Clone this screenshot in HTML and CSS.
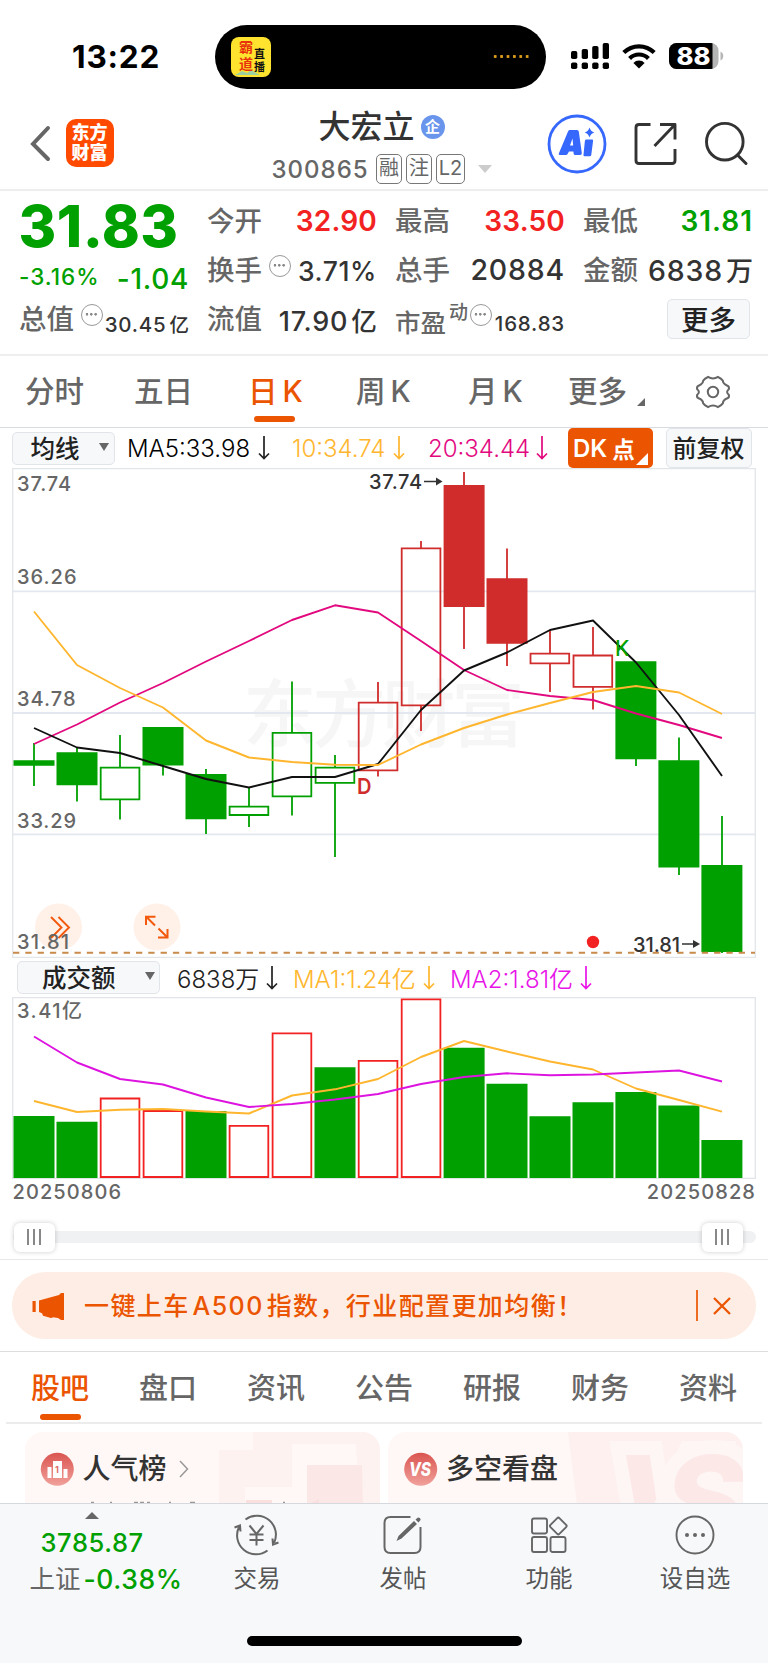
FILE: index.html
```html
<!DOCTYPE html>
<html lang="zh-CN">
<head>
<meta charset="utf-8">
<title>大宏立 300865</title>
<link rel="stylesheet" href="styles.css">
</head>
<body>
<div class="phone">
  <div class="status">
    <span class="time">13:22</span>
    <div class="island">
      <svg class="live" width="40" height="40" viewBox="0 0 40 40">
        <rect width="40" height="40" rx="8" fill="#ffe32e"/>
        <path d="M4 38l7-4 5 2 4-3 9 5z" fill="#9fd0a0"/>
        <text x="8" y="15" font-size="14" fill="#e8320c" font-weight="700">霸</text>
        <text x="8" y="32" font-size="14" fill="#e8320c" font-weight="700">道</text>
        <text x="23" y="21" font-size="11" fill="#111" font-weight="700">直</text>
        <text x="23" y="34" font-size="11" fill="#111" font-weight="700">播</text>
      </svg>
      <i class="dots"></i>
    </div>
    <svg class="signal" width="156" height="30" viewBox="568 41 156 30">
      <g fill="#000">
        <rect x="571" y="51" width="6.300" height="8" rx="1.800"/><rect x="581.700" y="49" width="6.300" height="10" rx="1.800"/><rect x="592.200" y="46" width="6.300" height="13" rx="1.800"/><rect x="602.700" y="43" width="6.300" height="16" rx="1.800"/>
        <rect x="571" y="62.500" width="6.300" height="6.500" rx="1.800"/><rect x="581.700" y="62.500" width="6.300" height="6.500" rx="1.800"/><rect x="592.200" y="62.500" width="6.300" height="6.500" rx="1.800"/><rect x="602.700" y="62.500" width="6.300" height="6.500" rx="1.800"/>
        <path d="M639 68.500l-5.600-5.600a8 8 0 0 1 11.200 0z"/>
      </g>
      <path d="M623.800 52.600a21.500 21.500 0 0 1 30.400 0M629.600 58.400a13.300 13.300 0 0 1 18.800 0" fill="none" stroke="#000" stroke-width="4.200"/>
      <clipPath id="bat"><rect x="669" y="43" width="49.500" height="26" rx="7.500"/></clipPath>
      <g clip-path="url(#bat)"><rect x="669" y="43" width="50" height="26" fill="#b5b5b5"/><rect x="669" y="43" width="43.500" height="26" fill="#000"/></g>
      <path d="M720.500 51.500a5 5 0 0 1 0 9z" fill="#b5b5b5"/>
      <text x="676.500" y="65" font-size="24" font-weight="800" fill="#fff" textLength="34" lengthAdjust="spacingAndGlyphs">88</text>
    </svg>
  </div>

  <header class="head">
    <svg class="back" width="22" height="38" viewBox="0 0 22 38"><path d="M19 3L4 19l15 15" fill="none" stroke="#666" stroke-width="4" stroke-linecap="round"/></svg>
    <div class="logo"><span>东方</span><span>财富</span></div>
    <div class="name">
      <div class="name-top"><h1>大宏立</h1><em>企</em></div>
      <div class="name-sub"><b>300865</b><i>融</i><i>注</i><i class="l2">L2</i>
        <svg width="14" height="8" viewBox="0 0 14 8"><path d="M0 0h14L7 8z" fill="#ccc"/></svg></div>
    </div>
    <svg class="ai" width="60" height="60" viewBox="547.500 113.500 60 60">
      <circle cx="577.500" cy="143.500" r="28" fill="none" stroke="#3768fe" stroke-width="2.800"/>
      <path fill="#3768fe" fill-rule="evenodd" d="M568 129.500h9.500q1.500 0 1.800 1.500l3 21.500q.2 2-1.600 2h-5q-1.500 0-1.600-1.500l-.2-2h-4.500l-1 2q-.7 1.500-2.200 1.500h-6q-1.600 0-.8-1.700l9-21.500q.6-1.800 1.600-1.800zM573 138l-2.500 7h3.200zM586 139h6.500q1.300 0 1.100 1.300l-1.800 14q-.2 1.500-1.500 1.500h-5.200q-1.300 0-1.100-1.500l1.400-14q.1-1.300 1.600-1.300zM590 127q1.200 4 4.800 5-3.600 1-4.800 5-1.200-4-4.800-5 3.600-1 4.800-5z"/>
    </svg>
    <svg class="share" width="46" height="46" viewBox="632 120.500 46 46"><path d="M650.500 124H639q-3 0-3 3v33q0 3 3 3h33q3 0 3-3v-11.500M660 124h15v15M675 124l-20.500 21.500" fill="none" stroke="#333" stroke-width="2.900" stroke-linejoin="round"/></svg>
    <svg class="search" width="46" height="46" viewBox="703 120.500 46 46"><circle cx="724.800" cy="141.200" r="18.300" fill="none" stroke="#333" stroke-width="2.900"/><path d="M737.500 154.500l8.500 8.500" stroke="#333" stroke-width="3" stroke-linecap="round"/></svg>
  </header>

  <section class="quote">
    <div class="col">
      <div class="price">31.83</div>
      <div class="change"><span>-3.16%</span><b>-1.04</b></div>
      <div class="cell"><span>总值</span><i class="info"></i><b class="small">30.45<u>亿</u></b></div>
    </div>
    <div class="col">
      <div class="cell"><span>今开</span><b class="up">32.90</b></div>
      <div class="cell"><span>换手</span><i class="info"></i><b class="mid">3.71%</b></div>
      <div class="cell"><span>流值</span><b class="mid2">17.90<u>亿</u></b></div>
    </div>
    <div class="col">
      <div class="cell"><span>最高</span><b class="up">33.50</b></div>
      <div class="cell"><span>总手</span><b>20884</b></div>
      <div class="cell pe"><span>市盈</span><sup>动</sup><i class="info"></i><b class="small">168.83</b></div>
    </div>
    <div class="col">
      <div class="cell"><span>最低</span><b class="down">31.81</b></div>
      <div class="cell"><span>金额</span><b>6838<u>万</u></b></div>
      <div class="cell end"><button class="more">更多</button></div>
    </div>
  </section>

  <nav class="periods">
    <a>分时</a><a>五日</a><a class="on">日<s>K</s></a><a>周<s>K</s></a><a>月<s>K</s></a>
    <a class="has-tri">更多<svg width="8" height="8" viewBox="0 0 8 8"><path d="M8 0v8H0z" fill="#666"/></svg></a>
    <svg class="gear" width="36" height="36" viewBox="-18 -18 36 36" fill="none" stroke="#666" stroke-width="2"><path transform="scale(1 1.060)" d="M-5-14.200Q0-11.200 5-14.200Q8.200-13 9.800-10.800Q10-7.600 14.400-6Q16.600-5 15.800-2.600Q12.400 0 15.800 2.600Q16.600 5 14.400 6Q10 7.600 9.800 10.800Q8.200 13 5 14.200Q0 11.200-5 14.200Q-8.200 13-9.800 10.800Q-10 7.600-14.400 6Q-16.600 5-15.800 2.600Q-12.400 0-15.800-2.600Q-16.600-5-14.400-6Q-10-7.600-9.800-10.800Q-8.200-13-5-14.200Z"/><circle r="5.200"/></svg>
  </nav>

  <div class="legend ma">
    <button class="pick">均线<svg width="10" height="8" viewBox="0 0 10 8"><path d="M0 0h10L5 8z"/></svg></button>
    <span class="m1">MA5:33.98</span><svg class="arr" width="12" height="24" viewBox="0 0 12 24"><path d="M6 0v22.500M1 17.500l5 5 5-5"/></svg>
    <span class="m2">10:34.74</span><svg class="arr a2" width="12" height="24" viewBox="0 0 12 24"><path d="M6 0v22.500M1 17.500l5 5 5-5"/></svg>
    <span class="m3">20:34.44</span><svg class="arr a3" width="12" height="24" viewBox="0 0 12 24"><path d="M6 0v22.500M1 17.500l5 5 5-5"/></svg>
    <button class="dk">DK<u>点</u><svg width="12" height="12" viewBox="0 0 12 12"><path d="M12 0v12H0z" fill="#fff"/></svg></button>
    <button class="adj">前复权</button>
  </div>

  <svg class="kline" width="768" height="490" viewBox="0 468 768 490">
    <g font-size="74" font-weight="500" fill="#f6f6f6"><text x="243" y="741" textLength="282">东方财富</text></g>
    <path d="M12.700 958V468.500H755.300V958M12.700 957.300H755.300" fill="none" stroke="#e3e6e9" stroke-width="1.300"/>
    <path d="M13 591.300H755M13 713H755M13 834.300H755" stroke="#e3e7f0" stroke-width="1.800"/>
    <circle cx="58.500" cy="927" r="23.500" fill="#fff0e8"/><circle cx="157" cy="927" r="23.500" fill="#fff0e8"/>
    <path d="M51 917l10.500 10.500L51 938M58.500 917L69 927.500 58.500 938" fill="none" stroke="#f2590c" stroke-width="1.900"/>
    <path d="M146 925v-8.300h9.500M146.500 917l8.500 8.500M167.500 929v8.500H158M167 937l-8.500-8.500" fill="none" stroke="#f2590c" stroke-width="2"/>
    <g class="axis" font-size="20" font-weight="500" fill="#666">
      <text x="17" y="490.700" textLength="54">37.74</text><text x="17" y="584" textLength="59.500">36.26</text><text x="17" y="706" textLength="58.500">34.78</text><text x="17" y="827.500" textLength="59">33.29</text><text x="17" y="949.300" textLength="52">31.81</text>
    </g>
    <g stroke="#d02c2c" stroke-width="1.800" fill="#fff">
      <path d="M378 682v21M378 770v6.500M421 541v7M421 705v26M464 472v177M507 548.500V666M550 631v22M550 663v29M593 627v28M593 687v22.500"/>
      <g fill="none"><path d="M358.700 702.700h38.700v67.700h-38.700zM401.700 548.300h38.700v157h-38.700zM530.500 653.700h38.700v9.700h-38.700zM573.500 655.500h38.700v31.300h-38.700z"/></g>
      <path fill="#d02c2c" stroke="none" d="M443.600 485h41v122h-41zM486.500 578.300h41v65.500h-41z"/>
    </g>
    <g stroke="#00a000" stroke-width="1.800">
      <path d="M34 743v43M77 747v54.500M120 735v32M120 800v19.500M163 727v48.500M206 769v65M249 787v19M249 815v12M292 681.500V732M292 797v18.500M335 755v12M335 783v74M636 759v7M679 737.500V875M722 816v137"/>
      <path fill="none" d="M100.700 767.600h38.700v31.700h-38.700zM229.600 806.600h38.700v8.400h-38.700zM272.600 732.800h38.700v63.500h-38.700zM315.600 767.600h38.700v15.300h-38.700z"/>
      <path fill="#00a000" stroke="none" d="M13.500 760.200h41v5.500h-41zM56.500 752.300h41v33h-41zM142.500 727h41v38.500h-41zM185.500 774h41v45.200h-41zM615.400 661.300h41v98h-41zM658.400 760.200h41v107.200h-41zM701.400 865h41v87h-41z"/>
    </g>
    <g fill="none" stroke-width="1.900" stroke-linejoin="round">
      <path stroke="#e2097f" d="M34 744L77 724.500 120 702.500 163 683 206 661.500 249 641 292 620 335 605.300 378 612.500 421 641 464 670 507 690 550 696 593 700 636 713.500 679 725 722 738"/>
      <path stroke="#111" d="M34 728L77 747.500 120 753 163 766 206 779 249 787.500 292 777 335 777 378 764 421 710 464 670.500 507 652.500 550 630 593 620.500 636 662.500 679 715 722 776"/>
      <path stroke="#ffb62e" d="M34 611.500L77 665 120 688 163 707.500 206 740.500 249 757.500 292 762 335 764.700 378 765 421 744.500 464 728 507 714.500 550 703 593 692 636 686 679 692.500 722 714"/>
    </g>
    <path d="M13 952.700H755" stroke="#c98a4a" stroke-width="2" stroke-dasharray="6.300 6"/>
    <text x="357" y="793.500" font-size="22" font-weight="600" fill="#d02c2c" textLength="14.500" lengthAdjust="spacingAndGlyphs">D</text>
    <text x="615" y="655.500" font-size="21" font-weight="500" fill="#00a000">K</text>
    <g font-size="20" font-weight="500" fill="#333"><text x="369" y="488.500" textLength="53">37.74</text><text x="633" y="951.500" textLength="47">31.81</text></g>
    <path d="M424 481.500h12M682 944h12" stroke="#333" stroke-width="1.600"/><path d="M436 477.500l6.500 4-6.500 4zM693 940l7 4-7 4z" fill="#333"/>
    <circle cx="593" cy="942" r="6.200" fill="#f32222"/>
  </svg>

  <div class="legend vol">
    <button class="pick wide">成交额<svg width="10" height="8" viewBox="0 0 10 8"><path d="M0 0h10L5 8z"/></svg></button>
    <span class="v1">6838万</span><svg class="arr" width="12" height="24" viewBox="0 0 12 24"><path d="M6 0v22.500M1 17.500l5 5 5-5"/></svg>
    <span class="v2">MA1:1.24亿</span><svg class="arr a2" width="12" height="24" viewBox="0 0 12 24"><path d="M6 0v22.500M1 17.500l5 5 5-5"/></svg>
    <span class="v3">MA2:1.81亿</span><svg class="arr a4" width="12" height="24" viewBox="0 0 12 24"><path d="M6 0v22.500M1 17.500l5 5 5-5"/></svg>
  </div>

  <svg class="volume" width="768" height="182" viewBox="0 997 768 182">
    <path d="M12.700 997.700H755.300V1178.300H12.700z" fill="none" stroke="#e1e4e8" stroke-width="1.300"/>
    <text x="17" y="1018" font-size="20" font-weight="500" fill="#666" textLength="65">3.41亿</text>
    <path fill="#00a000" d="M13.500 1116h41v62h-41zM56.500 1121.700h41v56.300h-41zM185.500 1111h41v67h-41zM314.500 1067.300h41v110.700h-41zM443.600 1047.700h41v130.300h-41zM486.500 1083.700h41v94.300h-41zM529.500 1116.300h41v61.700h-41zM572.500 1102.300h41v75.700h-41zM615.400 1092h41v86h-41zM658.400 1105.500h41v72.500h-41zM701.400 1140h41v38h-41z"/>
    <path fill="none" stroke="#f32222" stroke-width="1.800" d="M100.700 1098.500h38.700v78.500h-38.700zM143.600 1111h38.700v66h-38.700zM229.600 1125.800h38.700v51.200h-38.700zM272.600 1033.300h38.700v143.700h-38.700zM358.700 1060.800h38.700v116.200h-38.700zM401.700 999.300h38.700v177.700h-38.700z"/>
    <g fill="none" stroke-width="1.900" stroke-linejoin="round">
      <path stroke="#ffb62e" d="M34 1101L77 1112 120 1109.700 163 1109 206 1111.500 249 1113.500 292 1095.500 335 1089.300 378 1079 421 1057 464 1041 507 1051.500 550 1061.500 593 1069.500 636 1088.500 679 1100 722 1111.700"/>
      <path stroke="#dd14e0" d="M34 1036.500L77 1062.500 120 1079 163 1084.500 206 1097.500 249 1107 292 1104 335 1099.500 378 1094 421 1084 464 1077 507 1073.300 550 1075.300 593 1074.500 636 1072.500 679 1070.500 722 1081.500"/>
    </g>
  </svg>
  <div class="dates"><span>20250806</span><span>20250828</span></div>
  <div class="slider"><div class="track"><i class="thumb"></i><i class="thumb"></i></div></div>

  <div class="notice-wrap">
    <div class="notice">
      <svg width="34" height="30" viewBox="32 1290 34 30"><path d="M32.500 1300h3.200v11h-3.200zM39 1299.500l20-5.500 2-2h3v27h-3l-3-2-5-.8q-1 1-3 .6l-7-2-1-2.500-3-1.300z" fill="#eb5400"/></svg>
      <p>一键上车<s>A500</s>指数，行业配置更加均衡！</p>
      <i class="bar"></i>
      <svg width="18" height="18" viewBox="0 0 18 18"><path d="M1 1l16 16M17 1L1 17" stroke="#eb5400" stroke-width="2.200"/></svg>
    </div>
  </div>

  <nav class="sections"><a class="on">股吧</a><a>盘口</a><a>资讯</a><a>公告</a><a>研报</a><a>财务</a><a>资料</a></nav>

  <div class="cards">
    <div class="card">
      <svg class="art" width="355" height="72" viewBox="25 1431 355 72">
        <path d="M253 1431h127v72h-21l-3-60h-64v43h-47v17h-26v-54h34z" fill="#fdf2f0"/><path d="M307 1464h55l1 39h-56z" fill="#fbe8e6"/>
        <path d="M246 1499h26v4h-26zM309 1503l10-5v5z" fill="#f9e0df"/>
        <path d="M91 1501.500h3M110 1501.500h2M134 1501.500h4M140 1501.500h4M147 1501.500h3M169 1501.500h2M190 1501.500h5M283 1501.500h2" stroke="#999" stroke-width="1.500"/>
        <linearGradient id="rd" x1="0" y1="0" x2="0" y2="1"><stop offset="0" stop-color="#da5550"/><stop offset="1" stop-color="#f1a19c"/></linearGradient>
        <circle cx="57.300" cy="1468.300" r="16.500" fill="url(#rd)"/>
        <path d="M53 1460h9v17h-9zM47.500 1466h4v11h-4zM63.500 1468h4v9h-4z" fill="#fff"/>
        <text x="55" y="1472" font-size="9" font-weight="700" fill="#dd6a65">1</text>
      </svg>
      <h2>人气榜</h2>
      <svg class="go" width="10" height="18" viewBox="0 0 10 18"><path d="M1 1l7.500 8L1 17" fill="none" stroke="#999" stroke-width="1.500"/></svg>
    </div>
    <div class="card">
      <svg class="art" width="355" height="72" viewBox="388 1431 355 72">
        <path d="M568 1431h175v72H577z" fill="#fdf0ef"/>
        <text x="614" y="1543" font-size="122" font-weight="800" font-style="italic" fill="#fce8e7" stroke="#fdf6f4" stroke-width="28" paint-order="stroke" textLength="130">VS</text>
        <circle cx="420.700" cy="1468.300" r="16.500" fill="url(#rd)"/>
        <text x="409" y="1475" font-size="18.500" font-weight="800" font-style="italic" fill="#fff" textLength="22" lengthAdjust="spacingAndGlyphs">VS</text>
      </svg>
      <h2>多空看盘</h2>
    </div>
  </div>

  <footer class="dock">
    <div class="index">
      <svg width="14" height="7" viewBox="0 0 14 7"><path d="M0 7h14L7 0z" fill="#666"/></svg>
      <b>3785.87</b>
      <div><span>上证</span><b>-0.38%</b></div>
    </div>
    <div class="item"><svg width="46" height="42" viewBox="-22.500 -21 46 42" fill="none" stroke="#666" stroke-width="2"><path d="M-11-15.500A19 19 0 0 1 17.500 8M11 15.500A19 19 0 0 1-17.500-8M-22-7.500l5.500-2 .5 6M22 7.500l-5.500 2-.5-6M-7-9.500L0-1l7-8.500M0-1V10.500M-7-.500H7M-7 5H7"/></svg><span>交易</span></div>
    <div class="item"><svg width="42" height="42" viewBox="-20.500 -21 42 42" fill="none" stroke="#666" stroke-width="2"><path d="M8-18h-20q-6 0-6 6v24q0 6 6 6h24q6 0 6-6V-8"/><path d="M-6 6l2-5L11.500-14l3 3L-1 3.500zM13-15.500l2.500-2q3 0 2.500 2.500l-2 2.500z" fill="#666" stroke="none"/></svg><span>发帖</span></div>
    <div class="item"><svg width="42" height="42" viewBox="-21 -21 42 42" fill="none" stroke="#666" stroke-width="1.900"><rect x="-17" y="-16.500" width="15" height="15" rx="2"/><rect x="-17" y="2" width="15" height="15" rx="2"/><rect x="1.500" y="2" width="15" height="15" rx="2"/><rect x="3" y="-15.300" width="12.600" height="12.600" rx="1.500" transform="rotate(45 9.300 -9)"/></svg><span>功能</span></div>
    <div class="item"><svg width="42" height="42" viewBox="-21 -21 42 42"><circle r="18.500" fill="none" stroke="#666" stroke-width="1.900"/><g fill="#666"><circle cx="-8" r="2"/><circle r="2"/><circle cx="8" r="2"/></g></svg><span>设自选</span></div>
    <i class="home"></i>
  </footer>
</div>
</body>
</html>
```
FILE: styles.css
```css
* { box-sizing: border-box; margin: 0; padding: 0; }
body { background: #fff; font-family: Inter, "Noto Sans CJK SC", sans-serif; color: #333; }
i, em { font-style: normal; }
s, u { text-decoration: none; }
svg { display: block; flex: none; }
svg text { font-family: Inter, "Noto Sans CJK SC", sans-serif; }
button { font: inherit; border: 1.5px solid #e1e4e9; background: #f6f8fa; border-radius: 5px; color: #222; display: flex; align-items: center; flex: none; }
.phone { width: 768px; height: 1663px; overflow: hidden; display: flex; flex-direction: column; }
.phone > * { flex: none; white-space: nowrap; }

.status { height: 112px; display: flex; align-items: flex-start; }
.time { width: 215px; padding-left: 72px; margin-top: 37px; font-size: 31.500px; line-height: 40px; font-weight: 700; letter-spacing: .8px; color: #000; }
.island { width: 331px; height: 64px; margin-top: 24.500px; border-radius: 32px; background: #000; display: flex; align-items: center; justify-content: space-between; padding: 0 17px 0 16px; }
.dots { width: 37px; height: 3px; background: radial-gradient(circle, #d99a1c 1.300px, transparent 1.700px) 0 0 / 6.400px 3px; }
.signal { margin: 41px 0 0 22px; }

.head { height: 79px; border-bottom: 2px solid #eee; display: flex; align-items: flex-start; }
.back { margin: 13px 0 0 28.500px; }
.logo { width: 48px; height: 48px; margin: 6.500px 0 0 15px; border-radius: 10px; background: #ff4a00; color: #fff; display: flex; flex-direction: column; align-items: center; justify-content: center; font-weight: 900; font-size: 18px; line-height: 20px; }
.name { width: 240px; margin-left: 151px; padding-left: 7px; }
.name-top { display: flex; align-items: center; height: 32px; padding-left: 47px; margin-top: -1px; }
.name-top h1 { font-size: 32px; line-height: 32px; font-weight: 500; color: #333; }
.name-top em { width: 24px; height: 24px; margin: -1px 0 0 6px; border-radius: 50%; background: #6a95ec; color: #fff; font-size: 15px; line-height: 24px; font-weight: 700; text-align: center; }
.name-sub { display: flex; align-items: center; height: 30px; margin-top: 11px; color: #666; }
.name-sub b { width: 104.500px; font-size: 24px; font-weight: 500; letter-spacing: 1px; }
.name-sub i { width: 26px; height: 30px; margin-right: 4px; border: 1.300px solid #777; border-radius: 5px; font-size: 20px; line-height: 27px; text-align: center; }
.name-sub .l2 { width: 29px; margin-right: 13px; }
.ai { margin: 1.500px 0 0 42.500px; }
.share { margin: 8.500px 0 0 24.500px; }
.search { margin: 8.500px 0 0 25px; }

.quote { height: 165px; border-bottom: 2px solid #eee; padding: 5px 16px 0 20px; display: grid; grid-template-columns: 168px 168px 168px 168px; column-gap: 20px; }
.price { height: 60px; margin-left: -1.500px; font-size: 57.500px; line-height: 60px; font-weight: 800; color: #00a000; letter-spacing: .5px; }
.change { height: 38px; padding-top: 8px; display: flex; justify-content: space-between; align-items: center; color: #00a000; }
.change span { font-size: 22.500px; font-weight: 500; margin: -6px 0 0 -1px; letter-spacing: 1px; }
.change b { font-size: 28px; font-weight: 500; letter-spacing: .7px; margin-right: -1px; }
.cell { height: 49px; display: flex; align-items: center; }
.cell span { margin: -3px 0 0 -1px; font-size: 27.500px; font-weight: 500; color: #666; }
.cell b { margin-left: auto; margin-right: -1px; font-size: 28.500px; font-weight: 500; letter-spacing: .8px; }
.cell u { margin-left: 3px; font-size: .95em; letter-spacing: 0; }
.cell b.up { color: #f32222; font-weight: 600; font-size: 28px; letter-spacing: .2px; }
.cell b.down { color: #00a000; font-weight: 600; font-size: 28px; letter-spacing: 1px; }
.cell b.small { font-size: 20.500px; letter-spacing: .8px; margin-top: 9px; }
.cell b.mid { font-size: 26.500px; margin-top: 3px; letter-spacing: .6px; }
.cell b.mid2 { font-size: 27px; margin-top: 1px; }
.info { flex: none; width: 22px; height: 22px; margin: -8px 0 0 7px; border: 1.700px solid #999; border-radius: 50%; background: radial-gradient(circle at 5px 9.300px, #888 1px, transparent 1.600px), radial-gradient(circle at 9.300px 9.300px, #888 1px, transparent 1.600px), radial-gradient(circle at 13.600px 9.300px, #888 1px, transparent 1.600px); }
.pe span { font-size: 25.500px; margin-top: 3px; }
.pe sup { font-size: 19px; font-weight: 500; line-height: 24px; margin: -12px 0 0 3px; color: #666; }
.pe .info { margin-left: 1.500px; }
.end { justify-content: flex-end; }
.more { width: 83px; height: 40px; margin-right: 2px; padding-bottom: 2px; justify-content: center; font-size: 27.500px; font-weight: 500; }

.periods { height: 72px; border-bottom: 1.500px solid #d8dbe2; display: grid; grid-template-columns: 109px 109px 110px 110px 112px 118px 84px; justify-content: start; font-size: 29.500px; font-weight: 500; color: #666; }
.periods a { position: relative; height: 71px; line-height: 71px; padding-left: 25px; }
.periods a:nth-child(3) { padding-left: 30px; }
.periods a:nth-child(4) { padding-left: 28px; }
.periods a:nth-child(5) { padding-left: 30px; }
.periods s { margin-left: 5px; }
.on { color: #eb5400; }
.periods .on::after { content: ""; position: absolute; left: 36px; bottom: 5px; width: 41px; height: 6px; border-radius: 3px; background: #eb5400; }
.has-tri { display: flex; align-items: center; padding-left: 18px !important; }
.has-tri svg { margin: 20px 0 0 10px; }
.gear { margin: 17.500px 0 0 26.500px; }

.legend { display: flex; align-items: center; font-size: 24px; font-weight: 350; }
.legend span { flex: none; }
.ma { height: 40px; padding-left: 12px; }
.vol { height: 39px; padding-left: 17px; }
.pick { width: 103px; height: 33px; padding-left: 17.500px; padding-bottom: 2px; font-size: 24.500px; font-weight: 500; }
.pick svg { margin-left: 19px; fill: #666; }
.wide { width: 143px; padding-left: 24px; }
.wide svg { margin-left: 29px; margin-top: -2px; }
.arr { fill: none; stroke: #222; stroke-width: 1.700; }
.a2 { stroke: #ffb62e; } .a3 { stroke: #e2097f; } .a4 { stroke: #e815e8; }
.m1 { width: 131px; margin-left: 12px; color: #000; }
.m2 { width: 101px; margin-left: 22px; color: #ffb62e; }
.m3 { width: 108px; margin-left: 23px; color: #e2097f; }
.dk { width: 85px; height: 40px; margin-left: 20px; padding-left: 5px; border: 0; background: #eb5400; color: #fff; font-weight: 600; font-size: 24px; position: relative; }
.dk u { font-size: 22.500px; margin-left: 5px; }
.dk svg { position: absolute; right: 5px; bottom: 3px; }
.adj { width: 86px; height: 40px; margin-left: 12.500px; padding-bottom: 3px; justify-content: center; font-size: 24px; font-weight: 500; }
.v1 { width: 89px; margin-left: 17px; color: #222; }
.v2 { width: 130px; margin-left: 15px; color: #ffb62e; }
.v3 { width: 130px; margin-left: 15px; color: #e815e8; }

.dates { height: 40px; padding: 0 12px 0 12.500px; display: flex; justify-content: space-between; font-size: 20px; line-height: 26px; font-weight: 500; letter-spacing: 1.100px; color: #666; }
.slider { height: 41px; border-bottom: 1.500px solid #e8e8ea; padding: 12px 12.500px; }
.track { height: 12px; border-radius: 6px; background: #f0f1f3; display: flex; align-items: center; justify-content: space-between; padding: 0 13px 0 1px; }
.thumb { width: 41px; height: 29px; border-radius: 6px; box-shadow: 0 0 5px rgba(0,0,0,.2); background: linear-gradient(90deg, #888 2.300px, transparent 2.300px) 13px 6px / 6.200px 16px no-repeat, linear-gradient(90deg, #888 2.300px, transparent 2.300px) 19.200px 6px / 6.200px 16px no-repeat, linear-gradient(90deg, #888 2.300px, transparent 2.300px) 25.400px 6px / 6.200px 16px no-repeat, #fff; }

.notice-wrap { height: 92px; padding: 12px 12px 0; border-bottom: 1.500px solid #ddd; }
.notice { height: 67px; border-radius: 33px; background: #feede4; display: flex; align-items: center; padding: 0 25px 0 20px; color: #eb5400; }
.notice p { margin: -3px 0 0 18px; font-size: 25px; font-weight: 500; letter-spacing: 1.400px; }
.notice s { margin: 0 3px; }
.bar { width: 2px; height: 31px; margin: 0 15px 0 auto; background: #eb5400; opacity: .85; }

.sections { height: 72px; margin: 0 6px; border-bottom: 2px solid #ececec; display: grid; grid-template-columns: repeat(7, 108px); font-size: 29px; font-weight: 500; color: #666; text-align: center; }
.sections a { position: relative; line-height: 73px; }
.sections .on::after { content: ""; position: absolute; left: 34px; top: 62px; width: 41px; height: 6px; border-radius: 3px; background: #eb5400; }

.cards { height: 79px; padding: 8px 25px 0; display: grid; grid-template-columns: 355px 355px; column-gap: 8px; overflow: hidden; }
.card { position: relative; height: 90px; border-radius: 18px 18px 0 0; overflow: hidden; background: #fff8f6; display: flex; align-items: flex-start; }
.art { position: absolute; left: 0; top: 0; }
.card h2 { position: relative; margin: 16px 0 0 57.500px; font-size: 28px; line-height: 42px; font-weight: 500; color: #333; }
.card:last-child h2 { margin-left: 58px; }
.go { position: relative; margin: 28px 0 0 12px; }

.dock { position: relative; flex: 1 !important; border-top: 1.500px solid #d5d9de; background: #f6f8fa; display: grid; grid-template-columns: 184px repeat(4, 146px); }
.index { padding: 8px 0 0 29.500px; color: #00a000; }
.index > svg { margin-left: 55px; }
.index b { font-weight: 500; font-size: 25.500px; line-height: 36px; letter-spacing: .6px; }
.index > b { display: block; margin: 6px 0 0 11px; }
.index div { display: flex; line-height: 36px; }
.index span { font-size: 25.500px; color: #666; margin-right: 3px; }
.index div b { font-size: 26.500px; letter-spacing: .6px; }
.item { display: flex; flex-direction: column; align-items: center; padding-top: 10px; font-size: 23.500px; line-height: 30px; color: #555; }
.item span { margin-top: 7.500px; }
.home { position: absolute; left: 247px; bottom: 17px; width: 275px; height: 10px; border-radius: 5px; background: #000; }
```
